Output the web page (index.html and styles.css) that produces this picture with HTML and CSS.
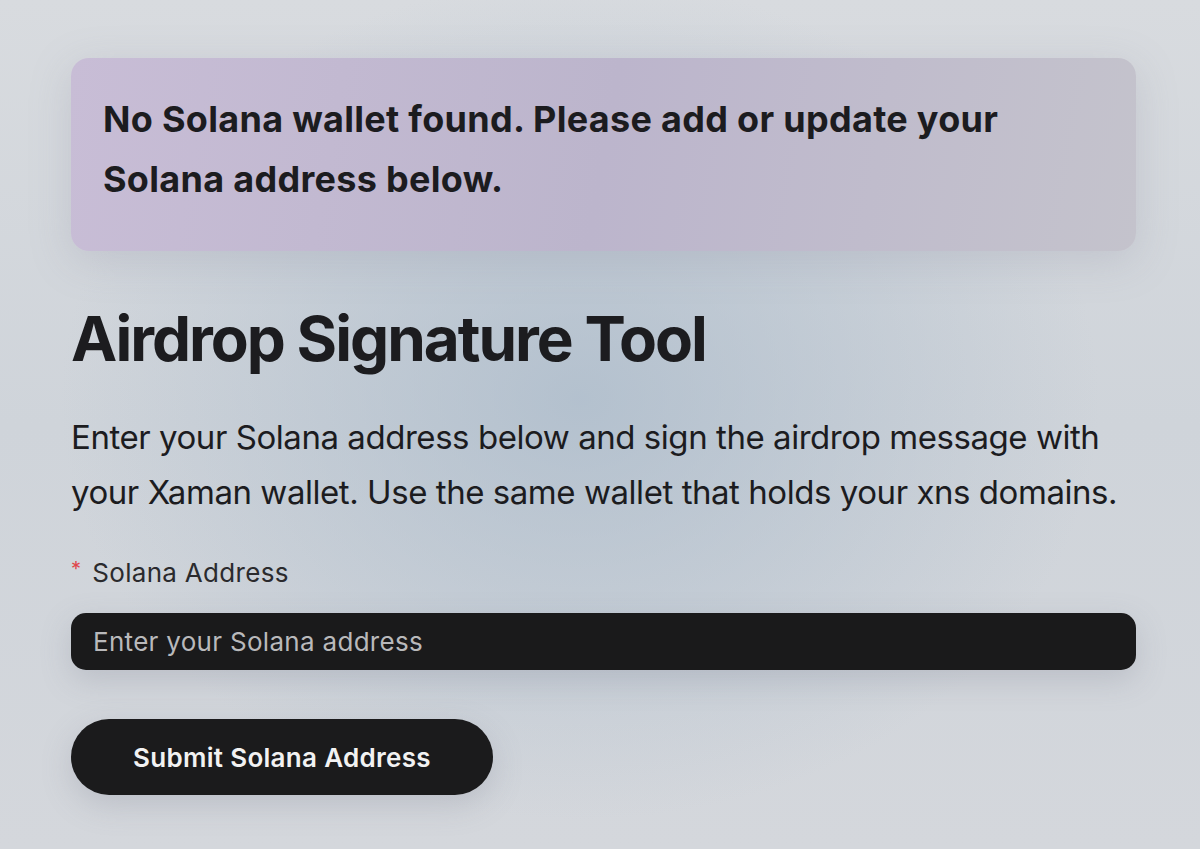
FILE: index.html
```html
<!DOCTYPE html>
<html lang="en">
<head>
<meta charset="utf-8">
<title>Airdrop Signature Tool</title>
<link rel="stylesheet" href="styles.css">
</head>
<body>
<main class="page">
  <div class="alert">
    <p class="alert-text">No Solana wallet found. Please add or update your Solana address below.</p>
  </div>
  <h1 class="title">Airdrop Signature Tool</h1>
  <p class="intro">Enter your Solana address below and sign the airdrop message with your Xaman wallet. Use the same wallet that holds your xns domains.</p>
  <form class="form">
    <label class="label" for="sol"><span class="req">*</span>Solana Address</label>
    <input class="input" id="sol" type="text" placeholder="Enter your Solana address">
    <button class="btn" type="button">Submit Solana Address</button>
  </form>
</main>
</body>
</html>
```
FILE: styles.css
```css
html, body {
  margin: 0;
  height: 100%;
}
body {
  font-family: Inter, "Open Sans", sans-serif;
  color: #1c1c1f;
  background:
    radial-gradient(ellipse 520px 420px at 580px 400px, rgba(170,186,202,0.75), rgba(170,186,202,0) 100%),
    linear-gradient(180deg, #d8dbdf 0%, #cfd4da 50%, #d4d7dc 100%);
  overflow: hidden;
}
.page {
  padding: 58px 64px 0 71px;
  width: 1065px;
}
.alert {
  border-radius: 18px;
  background: linear-gradient(100deg, #c8bdd6 0%, #bcb5cc 50%, #c4c3cc 100%);
  box-shadow: 0 10px 40px rgba(140,140,160,0.25);
  padding: 31px 32px 42px;
}
.alert-text {
  margin: 0;
  font-size: 36px;
  font-weight: 700;
  line-height: 60px;
  letter-spacing: 0.3px;
  max-width: 960px;
}
.title {
  margin: 50px 0 0;
  font-size: 62px;
  font-weight: 700;
  letter-spacing: -2px;
  line-height: 76px;
}
.intro {
  margin: 33px 0 0;
  font-size: 33px;
  line-height: 55px;
  letter-spacing: -0.45px;
  font-weight: 400;
  max-width: 1060px;
}
.form {
  display: flex;
  flex-direction: column;
  align-items: flex-start;
  margin-top: 36px;
}
.label {
  display: flex;
  align-items: flex-start;
  font-size: 26px;
  line-height: 34px;
  letter-spacing: 0.3px;
  color: #2a2a2d;
}
.req {
  color: #e0454c;
  margin-right: 11px;
  font-size: 20px;
  line-height: 26px;
}
.input {
  box-sizing: border-box;
  margin-top: 23px;
  width: 100%;
  height: 57px;
  border: none;
  border-radius: 15px;
  background: #1a1a1b;
  padding: 0 22px;
  font-family: inherit;
  font-size: 26px;
  letter-spacing: 0.3px;
  color: #eee;
  box-shadow: 0 10px 30px rgba(120,125,140,0.25);
  outline: none;
}
.input::placeholder {
  color: #b9b9bb;
}
.btn {
  margin-top: 49px;
  width: 422px;
  height: 76px;
  border: none;
  border-radius: 38px;
  background: #1b1b1c;
  color: #f2f2f2;
  font-family: inherit;
  font-size: 26px;
  font-weight: 600;
  letter-spacing: 0.3px;
  box-shadow: 0 10px 30px rgba(120,125,140,0.25);
}
```
